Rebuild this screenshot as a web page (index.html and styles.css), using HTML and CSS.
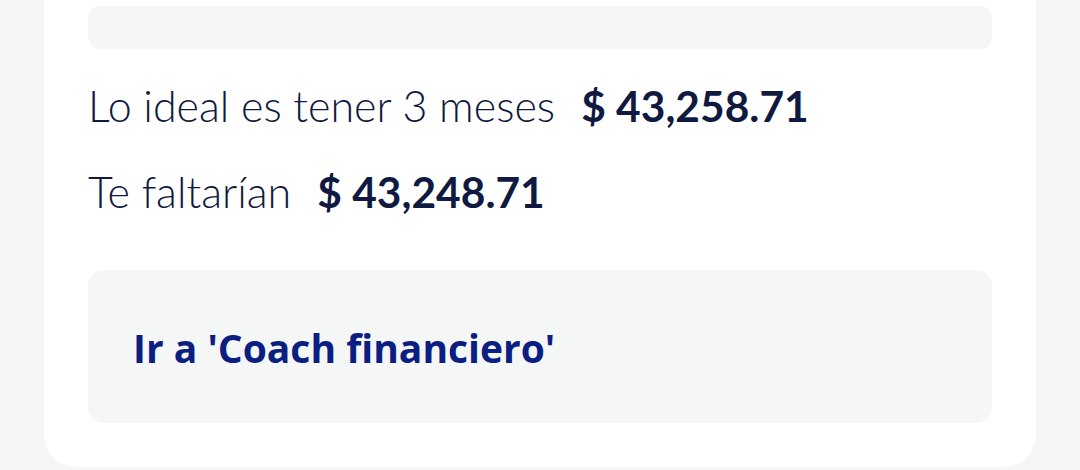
FILE: index.html
```html
<!DOCTYPE html>
<html lang="es">
<head>
<meta charset="utf-8">
<link rel="stylesheet" href="styles.css">
</head>
<body>
<div class="card">
  <div class="bar"></div>
  <div class="row row-first">
    <span class="label">Lo ideal es tener 3 meses</span>
    <span class="amount">$ 43,258.71</span>
  </div>
  <div class="row">
    <span class="label">Te faltarían</span>
    <span class="amount">$ 43,248.71</span>
  </div>
  <div class="action">
    <span class="link">Ir a 'Coach financiero'</span>
  </div>
</div>
</body>
</html>
```
FILE: styles.css
```css
html, body {
  margin: 0;
  padding: 0;
  background: #f5f6f6;
  width: 1080px;
  height: 470px;
  overflow: hidden;
}
.card {
  margin-left: 44px;
  width: 992px;
  height: 467px;
  box-sizing: border-box;
  padding: 6px 44px 0;
  background: #ffffff;
  border-radius: 0 0 32px 32px;
  font-family: "Lato", "Liberation Sans", sans-serif;
  color: #101a40;
  font-variant-ligatures: none;
}
.bar {
  height: 43px;
  background: #f5f6f6;
  border-radius: 12px;
}
.row {
  display: flex;
  align-items: baseline;
  gap: 26px;
  line-height: 48px;
  margin-top: 38px;
}
.row-first {
  margin-top: 33px;
}
.label {
  font-weight: 300;
  font-size: 43px;
}
.amount {
  font-weight: 700;
  font-size: 42.5px;
}
.action {
  margin-top: 54px;
  height: 153px;
  background: #f5f6f6;
  border-radius: 16px;
  display: flex;
  align-items: center;
  padding-left: 45px;
}
.link {
  font-family: "Open Sans", "Liberation Sans", sans-serif;
  font-size: 39px;
  font-weight: 700;
  color: #0b1f82;
  margin-top: 2px;
}
```
